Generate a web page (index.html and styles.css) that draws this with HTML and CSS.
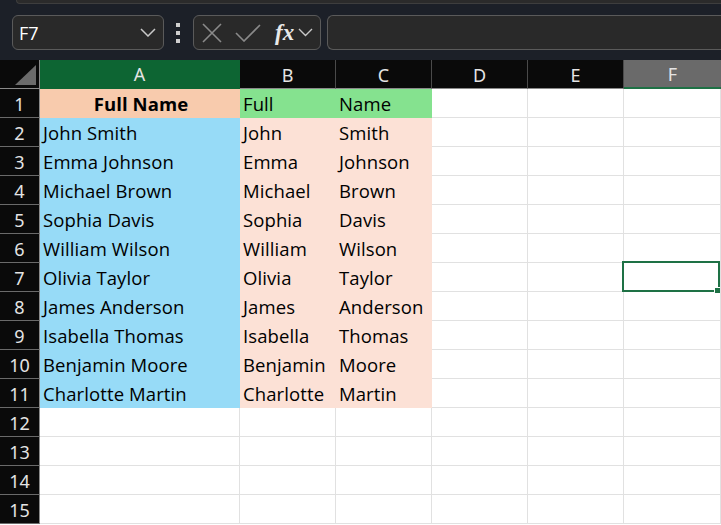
FILE: index.html
```html
<!DOCTYPE html>
<html lang="en">
<head>
  <meta charset="UTF-8">
  <title>Sheet</title>
  <link rel="stylesheet" href="styles.css">
</head>
<body>
  <div class="toolbar">
    <div class="ribbon-edge"></div>
    <div class="bar">
      <div class="namebox">
        <span>F7</span>
        <svg width="16" height="9" viewBox="0 0 16 9"><path d="M1 1 L8 8 L15 1" fill="none" stroke="#c8c8c8" stroke-width="1.5"/></svg>
      </div>
      <div class="dots"><i></i><i></i><i></i></div>
      <div class="fbtns">
        <svg width="20" height="20" viewBox="0 0 20 20"><path d="M1 1 L19 19 M19 1 L1 19" stroke="#8a8a8a" stroke-width="1.6"/></svg>
        <svg width="26" height="18" viewBox="0 0 26 18"><path d="M1 9 L9 17 L25 1" fill="none" stroke="#8a8a8a" stroke-width="1.6"/></svg>
        <span class="fx">fx</span>
        <svg width="15" height="9" viewBox="0 0 15 9"><path d="M1 1 L7.5 7.5 L14 1" fill="none" stroke="#c8c8c8" stroke-width="1.4"/></svg>
      </div>
      <div class="formula"></div>
    </div>
  </div>

  <div class="sheet">
    <div class="corner"><span></span></div>
    <div class="colhead sel-col">A</div>
    <div class="colhead">B</div>
    <div class="colhead">C</div>
    <div class="colhead">D</div>
    <div class="colhead">E</div>
    <div class="colhead active">F</div>

    <div class="rowhead">1</div>
    <div class="cell peach title">Full Name</div>
    <div class="cell green">Full</div>
    <div class="cell green">Name</div>
    <div class="cell"></div><div class="cell"></div><div class="cell"></div>

    <div class="rowhead">2</div>
    <div class="cell blue">John Smith</div><div class="cell pink">John</div><div class="cell pink">Smith</div>
    <div class="cell"></div><div class="cell"></div><div class="cell"></div>

    <div class="rowhead">3</div>
    <div class="cell blue">Emma Johnson</div><div class="cell pink">Emma</div><div class="cell pink">Johnson</div>
    <div class="cell"></div><div class="cell"></div><div class="cell"></div>

    <div class="rowhead">4</div>
    <div class="cell blue">Michael Brown</div><div class="cell pink">Michael</div><div class="cell pink">Brown</div>
    <div class="cell"></div><div class="cell"></div><div class="cell"></div>

    <div class="rowhead">5</div>
    <div class="cell blue">Sophia Davis</div><div class="cell pink">Sophia</div><div class="cell pink">Davis</div>
    <div class="cell"></div><div class="cell"></div><div class="cell"></div>

    <div class="rowhead">6</div>
    <div class="cell blue">William Wilson</div><div class="cell pink">William</div><div class="cell pink">Wilson</div>
    <div class="cell"></div><div class="cell"></div><div class="cell"></div>

    <div class="rowhead">7</div>
    <div class="cell blue">Olivia Taylor</div><div class="cell pink">Olivia</div><div class="cell pink">Taylor</div>
    <div class="cell"></div><div class="cell"></div><div class="cell selected"><span class="handle"></span></div>

    <div class="rowhead">8</div>
    <div class="cell blue">James Anderson</div><div class="cell pink">James</div><div class="cell pink">Anderson</div>
    <div class="cell"></div><div class="cell"></div><div class="cell"></div>

    <div class="rowhead">9</div>
    <div class="cell blue">Isabella Thomas</div><div class="cell pink">Isabella</div><div class="cell pink">Thomas</div>
    <div class="cell"></div><div class="cell"></div><div class="cell"></div>

    <div class="rowhead">10</div>
    <div class="cell blue">Benjamin Moore</div><div class="cell pink">Benjamin</div><div class="cell pink">Moore</div>
    <div class="cell"></div><div class="cell"></div><div class="cell"></div>

    <div class="rowhead">11</div>
    <div class="cell blue">Charlotte Martin</div><div class="cell pink">Charlotte</div><div class="cell pink">Martin</div>
    <div class="cell"></div><div class="cell"></div><div class="cell"></div>

    <div class="rowhead">12</div>
    <div class="cell"></div><div class="cell"></div><div class="cell"></div><div class="cell"></div><div class="cell"></div><div class="cell"></div>
    <div class="rowhead">13</div>
    <div class="cell"></div><div class="cell"></div><div class="cell"></div><div class="cell"></div><div class="cell"></div><div class="cell"></div>
    <div class="rowhead">14</div>
    <div class="cell"></div><div class="cell"></div><div class="cell"></div><div class="cell"></div><div class="cell"></div><div class="cell"></div>
    <div class="rowhead">15</div>
    <div class="cell"></div><div class="cell"></div><div class="cell"></div><div class="cell"></div><div class="cell"></div><div class="cell"></div>
  </div>
</body>
</html>
```

FILE: styles.css
```css
body {
  margin: 0;
  width: 721px;
  height: 525px;
  overflow: hidden;
  background: #fff;
  font-family: 'Open Sans', 'Noto Sans', sans-serif;
}
.toolbar {
  height: 60px;
  background: #1c2028;
}
.ribbon-edge {
  margin-left: 16px;
  height: 3px;
  background: #2b2b2b;
  border-bottom: 1px solid #3e3e3e;
  border-left: 1px solid #3e3e3e;
  border-bottom-left-radius: 4px;
}
.bar {
  display: flex;
  align-items: center;
  padding: 11px 0 0 12px;
}
.namebox {
  box-sizing: border-box;
  width: 152px;
  height: 35px;
  background: #292929;
  border: 1px solid #5a5a5a;
  border-radius: 6px;
  display: flex;
  align-items: center;
  justify-content: space-between;
  padding: 0 7px 0 6px;
  color: #fff;
  font-size: 18px;
}
.dots {
  display: flex;
  flex-direction: column;
  gap: 4px;
  margin: 0 13px 0 12px;
}
.dots i {
  display: block;
  width: 4px;
  height: 4px;
  background: #cfcfcf;
}
.fbtns {
  box-sizing: border-box;
  width: 128px;
  height: 35px;
  background: #292929;
  border: 1px solid #5a5a5a;
  border-radius: 6px;
  display: flex;
  align-items: center;
  padding: 0 4px 0 8px;
  gap: 13px;
}
.fbtns .fx {
  font-family: 'Liberation Serif', serif;
  font-style: italic;
  font-weight: bold;
  font-size: 23px;
  color: #e8e8e8;
  margin-left: 1px;
  margin-right: -9px;
  line-height: 1;
}
.formula {
  flex: 1;
  height: 35px;
  box-sizing: border-box;
  margin-left: 6px;
  background: #292929;
  border: 1px solid #5a5a5a;
  border-right: none;
  border-radius: 6px 0 0 6px;
}
.sheet {
  display: grid;
  grid-template-columns: 40px 200px 96px 96px 96px 96px 97px;
  grid-template-rows: repeat(16, 29px);
}
.corner {
  background: #0a0a0a;
  border-right: 1px solid #8a8a8a;
  border-bottom: 1px solid #8a8a8a;
  box-sizing: border-box;
  position: relative;
}
.corner span {
  position: absolute;
  right: 3px;
  bottom: 3px;
  width: 0;
  height: 0;
  border-left: 21px solid transparent;
  border-bottom: 20px solid #6b6b6b;
}
.colhead {
  box-sizing: border-box;
  background: #0a0a0a;
  color: #e4e4e4;
  font-family: 'Noto Sans', sans-serif;
  font-size: 18px;
  display: flex;
  align-items: center;
  justify-content: center;
  border-right: 1px solid #4a4a4a;
  border-bottom: 1px solid #8a8a8a;
  padding-top: 1px;
}
.colhead.sel-col {
  background: #0d6533;
  border-right-color: #0d6533;
  border-bottom: 2px solid #0d6533;
}
.colhead.active {
  background: #6a6a6a;
  border-right: none;
  border-bottom: 2px solid #1e7145;
}
.rowhead {
  box-sizing: border-box;
  background: #0a0a0a;
  color: #e4e4e4;
  font-family: 'Noto Sans', sans-serif;
  font-size: 18px;
  display: flex;
  align-items: center;
  justify-content: center;
  border-right: 1px solid #8a8a8a;
  border-bottom: 1px solid #6a6a6a;
  padding-top: 1px;
}
.cell {
  box-sizing: border-box;
  border-right: 1px solid #e1e1e1;
  border-bottom: 1px solid #e1e1e1;
  font-size: 18.5px;
  letter-spacing: 0.1px;
  color: #000;
  padding: 1px 0 0 3px;
  display: flex;
  align-items: center;
  white-space: nowrap;
  overflow: hidden;
}
.cell.blue {
  background: #97dbf7;
  border-color: #97dbf7;
}
.cell.pink {
  background: #fce1d6;
  border-color: #fce1d6;
}
.cell.peach {
  background: #f8cbad;
  border-color: #f8cbad;
}
.cell.green {
  background: #85e28f;
  border-color: #85e28f;
}
.cell.title {
  font-weight: bold;
  justify-content: center;
}
.cell.selected {
  overflow: visible;
  position: relative;
}
.cell.selected::before {
  content: '';
  position: absolute;
  left: -2px;
  top: -2px;
  right: 0;
  bottom: -1px;
  border: 2px solid #1e7145;
}
.handle {
  position: absolute;
  right: 0;
  bottom: -2px;
  width: 5px;
  height: 5px;
  background: #1e7145;
  border-left: 1px solid #fff;
  border-top: 1px solid #fff;
}
```
